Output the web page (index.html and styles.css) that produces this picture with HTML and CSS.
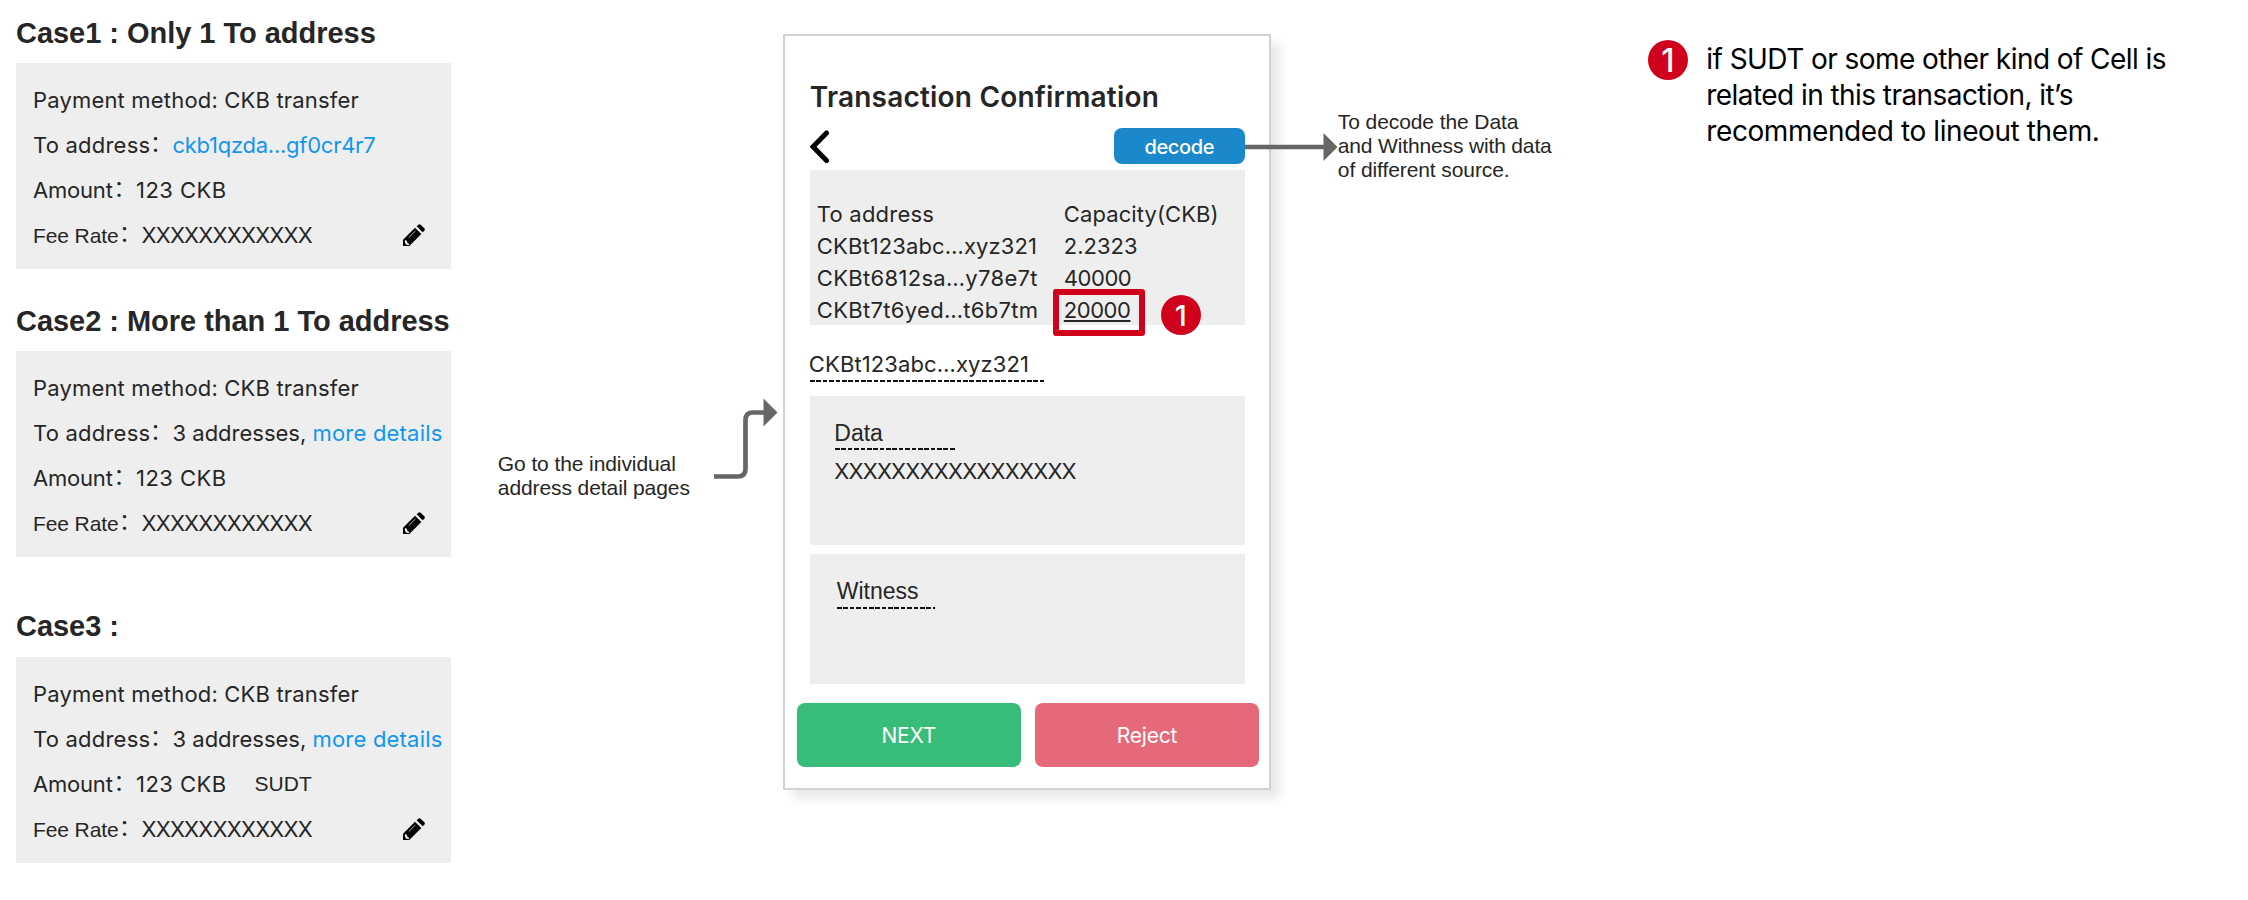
FILE: index.html
```html
<!DOCTYPE html>
<html lang="en">
<head>
<meta charset="utf-8">
<title>Transaction Confirmation</title>
<link rel="stylesheet" href="styles.css">
</head>
<body>
<svg class="defs" aria-hidden="true">
  <symbol id="pencil" viewBox="0 0 66 66">
    <path d="M0 66V47L36 11L55 30L19 66Z"/>
    <path d="M41 7L46 2Q49 -1 53 2L64 13Q67 16 64 20L59 25Z"/>
    <path d="M8 47L12 52L14 58L20 60L16 64L8 61L5 52Z" fill="#eee"/>
    <path d="M17 41L37 21" stroke="#ddd" stroke-width="2.5" fill="none"/>
  </symbol>
</svg>
<main class="board">
  <section class="cases">
    <article class="case">
      <h2>Case1 : Only 1 To address</h2>
      <div class="card">
        <div class="row"><span class="method">Payment method: CKB transfer</span></div>
        <div class="row"><span class="label to">To address</span><span class="colon">：</span><a class="hash">ckb1qzda...gf0cr4r7</a></div>
        <div class="row"><span class="label amount">Amount</span><span class="colon">：</span><span class="sum">123 CKB</span></div>
        <div class="row"><span class="label fee">Fee Rate</span><span class="colon">：</span><span class="mask">XXXXXXXXXXXX</span><svg class="edit"><use href="#pencil"/></svg></div>
      </div>
    </article>
    <article class="case">
      <h2>Case2 : More than 1 To address</h2>
      <div class="card">
        <div class="row"><span class="method">Payment method: CKB transfer</span></div>
        <div class="row"><span class="label to">To address</span><span class="colon">：</span><span class="count">3 addresses,</span><a class="more">more details</a></div>
        <div class="row"><span class="label amount">Amount</span><span class="colon">：</span><span class="sum">123 CKB</span></div>
        <div class="row"><span class="label fee">Fee Rate</span><span class="colon">：</span><span class="mask">XXXXXXXXXXXX</span><svg class="edit"><use href="#pencil"/></svg></div>
      </div>
    </article>
    <article class="case">
      <h2>Case3 :</h2>
      <div class="card">
        <div class="row"><span class="method">Payment method: CKB transfer</span></div>
        <div class="row"><span class="label to">To address</span><span class="colon">：</span><span class="count">3 addresses,</span><a class="more">more details</a></div>
        <div class="row"><span class="label amount">Amount</span><span class="colon">：</span><span class="sum">123 CKB</span><span class="sudt">SUDT</span></div>
        <div class="row"><span class="label fee">Fee Rate</span><span class="colon">：</span><span class="mask">XXXXXXXXXXXX</span><svg class="edit"><use href="#pencil"/></svg></div>
      </div>
    </article>
  </section>

  <aside class="hint go">Go to the individual<br>address detail pages</aside>
  <svg class="elbow" viewBox="0 0 64 82">
    <path d="M0 78.5H24Q31.5 78.5 31.5 71V22Q31.5 14.5 39 14.5H50" fill="none" stroke="#666" stroke-width="4.7"/>
    <path d="M49.5 0.5L63.5 14.5L49.5 28.5Z" fill="#666"/>
  </svg>

  <section class="phone">
    <h1>Transaction Confirmation</h1>
    <div class="toolbar">
      <svg class="back" viewBox="0 0 20 36"><path d="M16.5 5L3 18.7L16.5 32.5" fill="none" stroke="#000" stroke-width="5" stroke-linecap="round"/></svg>
      <button class="decode">decode</button>
    </div>
    <div class="panel outputs">
      <div class="output"><span class="to">To address</span><span class="cap">Capacity(CKB)</span></div>
      <div class="output"><span class="id">CKBt123abc…xyz321</span><span>2.2323</span></div>
      <div class="output"><span class="id wide">CKBt6812sa…y78e7t</span><span class="num">40000</span></div>
      <div class="output"><span class="id wide">CKBt7t6yed…t6b7tm</span><span class="num under">20000</span></div>
      <div class="mark"></div>
      <div class="badge pin">1</div>
    </div>
    <div class="current id">CKBt123abc…xyz321</div>
    <div class="dash d1"></div>
    <div class="panel data">
      <div class="name">Data</div>
      <div class="dash d2"></div>
      <div class="mask">XXXXXXXXXXXXXXXXX</div>
    </div>
    <div class="panel witness">
      <div class="name">Witness</div>
      <div class="dash d3"></div>
    </div>
    <div class="actions">
      <button class="next">NEXT</button>
      <button class="reject">Reject</button>
    </div>
    <svg class="arrow" viewBox="0 0 93 28"><path d="M0 14H80" stroke="#666" stroke-width="4.7"/><path d="M78.5 0L92.5 14L78.5 28Z" fill="#666"/></svg>
  </section>

  <aside class="hint dec">To decode the Data<br><span class="tight">and Withness with data</span><br>of different source.</aside>

  <section class="note">
    <div class="badge lead">1</div>
    <p>if SUDT or some other kind of Cell is<br>related in this transaction, it’s<br><span class="loose">recommended to lineout them.</span></p>
  </section>
</main>
</body>
</html>
```
FILE: styles.css
```css
* { box-sizing: border-box; }
body { margin: 0; background: #fff; color: #262626; font: 22px Inter, "Noto Sans CJK SC", sans-serif; }
h1, h2, p { margin: 0; }
button { border: 0; padding: 0; color: #fff; font: 21px Inter, sans-serif; border-radius: 8px; }
.defs { position: absolute; width: 0; height: 0; }
.board { display: flex; align-items: flex-start; width: 2248px; height: 900px; overflow: hidden; white-space: nowrap; }

.cases { flex: none; width: 435.3px; margin-left: 16px; padding-top: 17px; }
.case h2 { font: 700 29px/33px "Liberation Sans", sans-serif; letter-spacing: -.03px; margin-bottom: 13px; }
.case + .case h2 { margin: 36px 0 13px; }
.case + .case + .case h2 { margin: 53px 0 13.5px; }
.card { height: 206px; padding: 15px 0 0 17px; background: #eee; }
.row { display: flex; align-items: baseline; height: 45px; line-height: 45px; }
.method { letter-spacing: .18px; }
.to { letter-spacing: .22px; }
.label.to { width: 117px; }
.label.amount { width: 80.5px; letter-spacing: -.2px; }
.label.fee { width: 86px; font-family: "Liberation Sans", sans-serif; font-size: 21px; line-height: 43px; letter-spacing: -.1px; }
.colon { width: 22.5px; font-family: "Noto Sans CJK SC", sans-serif; line-height: 20px; transform: translateY(-2px); }
a { color: #1296f0; }
.hash { letter-spacing: -.26px; }
.sum { letter-spacing: .45px; }
.mask { letter-spacing: -.8px; }
.row .mask { line-height: 44px; }
.count { width: 140px; }
.more { letter-spacing: .2px; }
.sudt { margin-left: 28px; font: 21px "Liberation Sans", sans-serif; transform: translateY(-1px); }
.edit { width: 22px; height: 22px; margin: -1px 26.5px 0 auto; align-self: center; overflow: visible; }

.hint { flex: none; font: 21px/24px "Liberation Sans", sans-serif; letter-spacing: -.09px; }
.tight { letter-spacing: -.15px; }
.go { width: 216px; margin: 452px 0 0 46.5px; }
.elbow { flex: none; width: 64px; height: 82px; margin-top: 398px; }

.phone { position: relative; flex: none; width: 488px; height: 755.5px; margin: 34px 0 0 5px; padding: 44px 24px 0 25px; border: 2px solid #d2d2d2; background: #fff; box-shadow: 9px 9px 9px rgba(0,0,0,.085); }
.phone h1 { font: 600 28px/34px Inter, sans-serif; letter-spacing: .2px; }
.toolbar { display: flex; justify-content: space-between; height: 36px; margin-top: 14px; }
.back { width: 20px; height: 36px; }
.decode { width: 131px; padding-top: 1px; background: #1a88cb; font-size: 20px; letter-spacing: -.4px; font-weight: 500; }
.panel { background: #eee; }
.outputs { position: relative; height: 155px; margin-top: 6px; padding: 28px 0 0 7px; }
.output { display: grid; grid-template-columns: 247px 1fr; line-height: 32px; }
.id { letter-spacing: .12px; }
.wide { letter-spacing: .32px; }
.cap { letter-spacing: .1px; }
.num { letter-spacing: -.45px; }
.under { text-decoration: underline 2px; text-underline-offset: 2px; text-decoration-skip-ink: none; justify-self: start; }
.mark { position: absolute; left: 243px; top: 119px; width: 92px; height: 47px; border: 6px solid #d0021b; border-radius: 3px; }
.badge { display: flex; flex: none; align-items: center; justify-content: center; width: 40px; height: 40px; border-radius: 50%; background: #d0021b; color: #fff; font-size: 29px; font-weight: 500; }
.pin { position: absolute; left: 351px; top: 125px; padding-top: 1px; }
.current { margin-top: 24px; margin-left: -1px; line-height: 30px; }
.dash { height: 2.5px; background: repeating-linear-gradient(90deg, #111 0 4.7px, transparent 4.7px 6.38px); }
.d1 { width: 235px; margin-top: .7px; }
.data { height: 148.7px; margin-top: 13.8px; padding: 22px 0 0 25.5px; }
.name { font: 23px/30px "Liberation Sans", sans-serif; margin-left: -1px; }
.d2 { width: 120.5px; }
.data .mask { margin: 5.5px 0 0 -1px; line-height: 30px; }
.witness { height: 130px; margin-top: 9.3px; padding: 22px 0 0 27px; }
.witness .name { margin-left: 0; }
.d3 { width: 98px; margin-top: .7px; }
.actions { display: grid; grid-template-columns: 224px 224.5px; column-gap: 14px; margin: 19px 0 0 -13px; }
.actions button { height: 64px; padding-top: 2px; letter-spacing: -.2px; }
.next { background: #37bd79; }
.reject { background: #e6697a; }
.arrow { position: absolute; left: 460px; top: 97px; width: 93px; height: 28px; }

.dec { width: 220px; margin: 110px 0 0 67px; }
.note { display: flex; flex: none; margin: 40px 0 0 90px; color: #000; }
.lead { font-size: 32px; }
.note p { margin: 1px 0 0 18.5px; font-size: 28px; line-height: 36px; letter-spacing: -.56px; }
.loose { letter-spacing: -.41px; }
```
